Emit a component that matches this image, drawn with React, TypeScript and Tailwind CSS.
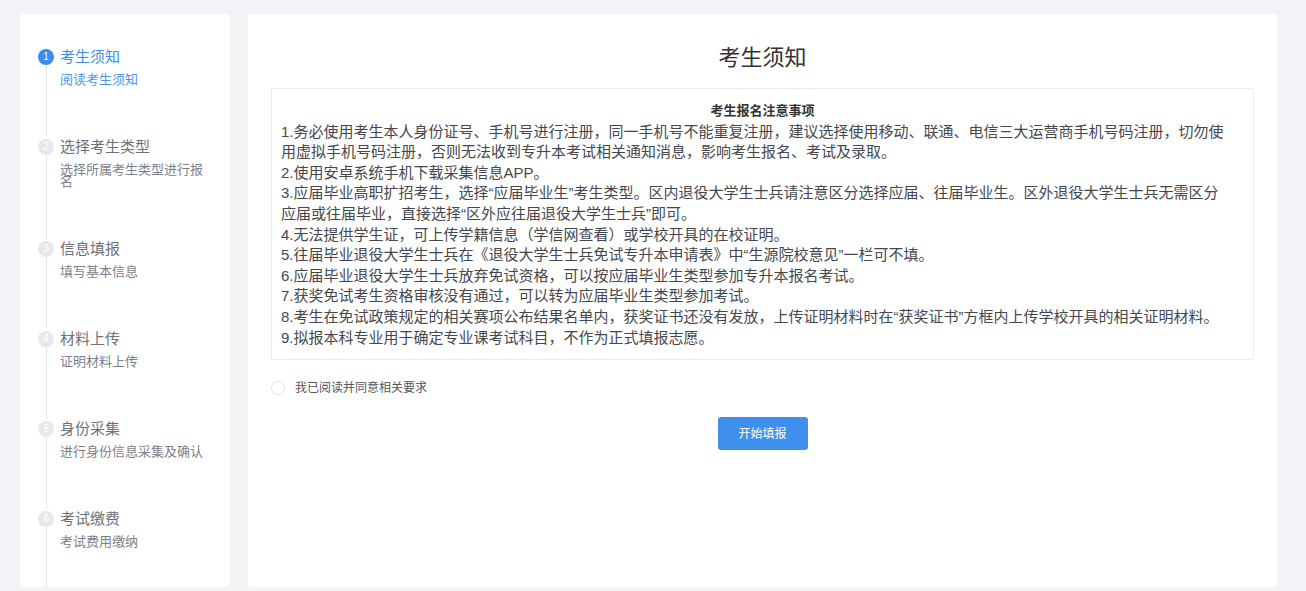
import { useState } from "react";

const steps = [
  { title: "考生须知", desc: "阅读考生须知" },
  { title: "选择考生类型", desc: "选择所属考生类型进行报名" },
  { title: "信息填报", desc: "填写基本信息" },
  { title: "材料上传", desc: "证明材料上传" },
  { title: "身份采集", desc: "进行身份信息采集及确认" },
  { title: "考试缴费", desc: "考试费用缴纳" },
];

// each entry is one visual line of the notice box
const notice = [
  "1.务必使用考生本人身份证号、手机号进行注册，同一手机号不能重复注册，建议选择使用移动、联通、电信三大运营商手机号码注册，切勿使",
  "用虚拟手机号码注册，否则无法收到专升本考试相关通知消息，影响考生报名、考试及录取。",
  "2.使用安卓系统手机下载采集信息APP。",
  "3.应届毕业高职扩招考生，选择“应届毕业生”考生类型。区内退役大学生士兵请注意区分选择应届、往届毕业生。区外退役大学生士兵无需区分",
  "应届或往届毕业，直接选择“区外应往届退役大学生士兵”即可。",
  "4.无法提供学生证，可上传学籍信息（学信网查看）或学校开具的在校证明。",
  "5.往届毕业退役大学生士兵在《退役大学生士兵免试专升本申请表》中“生源院校意见”一栏可不填。",
  "6.应届毕业退役大学生士兵放弃免试资格，可以按应届毕业生类型参加专升本报名考试。",
  "7.获奖免试考生资格审核没有通过，可以转为应届毕业生类型参加考试。",
  "8.考生在免试政策规定的相关赛项公布结果名单内，获奖证书还没有发放，上传证明材料时在“获奖证书”方框内上传学校开具的相关证明材料。",
  "9.拟报本科专业用于确定专业课考试科目，不作为正式填报志愿。",
];

const Steps = ({ active }: { active: number }) => (
  <div className="flex flex-col pt-[33px] pl-[18px]">
    {steps.map((s, i) => {
      const on = i === active;
      return (
        <div key={s.title} className="flex">
          {/* Circle + connector */}
          <div className="flex flex-col items-center w-4">
            <div
              className={`mt-[2px] w-4 h-4 rounded-full flex items-center justify-center text-[10px] leading-none text-white ${
                on ? "bg-[#3b8ded]" : "bg-[#e6e8ee]"
              }`}
            >
              {i + 1}
            </div>
            <div className="flex-1 w-px bg-[#e4e6ec]" />
          </div>

          {/* Text */}
          <div className="ml-[6px] w-[150px] pb-[51px]">
            <div
              className={`text-[15px] leading-5 ${
                on ? "text-[#3d8ee8]" : "text-[#6e7079]"
              }`}
            >
              {s.title}
            </div>
            <div
              className={`mt-[7px] text-[13px] leading-[12px] ${
                on ? "text-[#4c96e8]" : "text-[#7d808a]"
              }`}
            >
              {s.desc}
            </div>
          </div>
        </div>
      );
    })}
  </div>
);

export default function App() {
  const [agreed, setAgreed] = useState(false);

  return (
    <div
      className="h-screen w-full bg-[#f3f4f7] flex gap-[18px] pt-[14px] pb-1 pl-5 pr-[29px] overflow-hidden"
      style={{ fontFamily: '"Liberation Sans", "Noto Sans CJK SC", sans-serif' }}
    >
      {/* Sidebar steps */}
      <aside className="w-[210px] shrink-0 bg-white rounded-sm overflow-hidden">
        <Steps active={0} />
      </aside>

      {/* Main panel */}
      <main className="flex-1 bg-white rounded-sm px-[23px] pt-[29px] flex flex-col">
        <h1 className="text-center text-[22px] leading-[30px] text-[#333]">考生须知</h1>

        <div className="mt-[15px] border border-[#ebedf2] pt-3 pb-[11px] px-[9px] text-[15px] leading-[20.6px] text-[#45474d]">
          <div className="text-center font-bold text-[13px] text-[#333]">考生报名注意事项</div>
          {notice.map((line) => (
            <div key={line} className="whitespace-nowrap">
              {line}
            </div>
          ))}
        </div>

        {/* Agree */}
        <label className="mt-[21px] flex items-center gap-[10px] cursor-pointer w-fit">
          <input
            type="checkbox"
            checked={agreed}
            onChange={() => setAgreed(!agreed)}
            className="sr-only"
          />
          <span
            className={`w-[14px] h-[14px] rounded-full border ${
              agreed ? "border-[#3b8ded] bg-[#3b8ded]" : "border-[#e3e5ea] bg-white"
            }`}
          />
          <span className="text-[12px] leading-[14px] text-[#55575e]">我已阅读并同意相关要求</span>
        </label>

        <div className="mt-[22px] flex justify-center">
          <button className="w-[90px] h-[33px] rounded-[3px] bg-[#3f8fef] text-white text-[12px]">
            开始填报
          </button>
        </div>
      </main>
    </div>
  );
}
